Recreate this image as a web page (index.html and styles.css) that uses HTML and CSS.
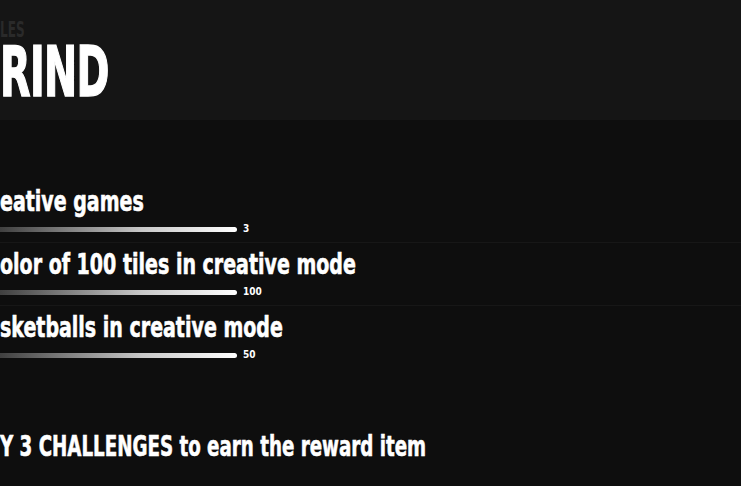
FILE: index.html
```html
<!DOCTYPE html>
<html lang="en">
<head>
    <meta charset="UTF-8">
    <meta name="viewport" content="width=device-width, initial-scale=1.0">
    <title>Challenges</title>
    <link rel="stylesheet" href="styles.css">
</head>
<body>
<div class="header">
    <div class="kicker">LES</div>
    <h1 class="title">RIND</h1>
</div>
<div class="list">
    <div class="row">
        <h2 class="task">eative games</h2>
        <div class="progress"><div class="bar"></div><span class="count">3</span></div>
    </div>
    <div class="row">
        <h2 class="task">olor of 100 tiles in creative mode</h2>
        <div class="progress"><div class="bar"></div><span class="count">100</span></div>
    </div>
    <div class="row last">
        <h2 class="task">sketballs in creative mode</h2>
        <div class="progress"><div class="bar"></div><span class="count">50</span></div>
    </div>
</div>
<p class="reward"><b>Y 3 CHALLENGES</b> to earn the reward item</p>
</body>
</html>
```

FILE: styles.css
```css
body{
    margin: 0;
    background-color: #0e0e0e;
    color: #fff;
    font-family: "DejaVu Sans Condensed", "DejaVu Sans", sans-serif;
    font-weight: bold;
    overflow: hidden;
    height: 486px;
}
/* the game font is a tall condensed one, squeeze the fallback */
.kicker, .title, .task, .reward{
    transform-origin: 0 50%;
    white-space: nowrap;
}
.header{
    background-color: #151515;
    height: 120px;
    padding-top: 22px;
    box-sizing: border-box;
}
.kicker{
    color: #2a2a2a;
    font-size: 21px;
    line-height: 16px;
    transform: scaleX(0.64);
}
.title{
    margin: 6px 0 0;
    font-size: 70px;
    line-height: 56px;
    letter-spacing: -1px;
    -webkit-text-stroke: 1.5px #fff;
    transform: scaleX(0.63);
}
.list{
    padding-top: 60px;
}
.row{
    height: 62px;
    border-bottom: 1px solid #171717;
}
.row.last{
    border-bottom: none;
}
.task{
    margin: 0;
    padding-top: 6px;
    font-size: 28px;
    line-height: 32px;
    -webkit-text-stroke: 0.6px #fff;
    transform: scaleX(0.755);
}
.progress{
    display: flex;
    align-items: center;
    gap: 6px;
    margin-top: 6px;
}
.bar{
    width: 237px;
    height: 5px;
    border-radius: 0 3px 3px 0;
    background: linear-gradient(to right, #404040, #c8c8c8 60%, #fff);
}
.count{
    font-size: 10px;
    line-height: 10px;
}
.reward{
    margin: 0;
    padding-top: 62px;
    font-size: 29px;
    line-height: 32px;
    -webkit-text-stroke: 0.6px #fff;
    transform: scaleX(0.70);
}
```
